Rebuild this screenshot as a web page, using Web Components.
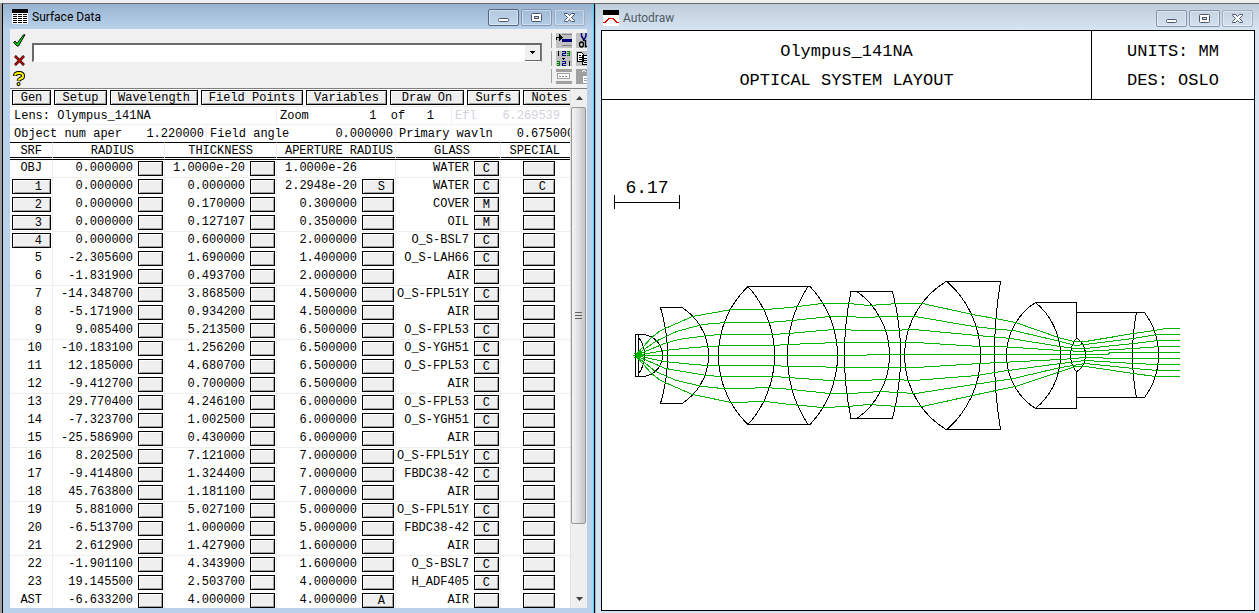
<!DOCTYPE html>
<html lang="en">
<head>
<meta charset="utf-8">
<title>Lens design workspace</title>
<style>
  html, body { height: 100%; margin: 0; }
  body { background: #a0a0a0; font-family: "Liberation Mono", monospace; font-size: 12px; color: #000; overflow: hidden; }
</style>
</head>
<body>
<mdi-desktop>
  <mdi-window heading="Surface Data" active>
    <svg slot="icon" width="16" height="16" viewBox="0 0 16 16" shape-rendering="crispEdges" aria-hidden="true">
      <path d="M0 0h16v15H0z" fill="#fff"/><path d="M0 0h16v4H0z"/>
      <path d="M1 5.500h4M6 5.500h4M11 5.500h4M1 7.500h4M6 7.500h4M11 7.500h4M1 9.500h4M6 9.500h4M11 9.500h4M1 11.500h4M6 11.500h4M11 11.500h4M1 13.500h4M6 13.500h4M11 13.500h4" stroke="#000"/>
    </svg>
    <surface-toolbar></surface-toolbar>
    <surface-sheet></surface-sheet>
  </mdi-window>
  <mdi-window heading="Autodraw">
    <svg slot="icon" width="16" height="16" viewBox="0 0 16 16" shape-rendering="crispEdges" aria-hidden="true">
      <path d="M0 0h16v16H0z" fill="#fff"/><path d="M0 0h16v5H0z"/>
      <path d="M0 12.500h2l4-4h4l4 4h2" fill="none" stroke="#e00000"/>
    </svg>
    <lens-layout></lens-layout>
  </mdi-window>
</mdi-desktop>

<script>
const define = (name, html, setup) => customElements.define(name, class extends HTMLElement {
  constructor() {
    super();
    const template = document.createElement('template');
    template.innerHTML = html;
    this.attachShadow({ mode: 'open' }).append(template.content.cloneNode(true));
  }
  connectedCallback() { if (setup) setup(this, this.shadowRoot); }
});

define('mdi-desktop', `
<style>
  :host { display: grid; grid-template-columns: 593fr 664fr; box-sizing: border-box; height: 100vh; padding: 0 0 0 2px;
    background: #a0a0a0; border-top: 3px solid #f0f0f0; }
</style><slot></slot>`);

define('mdi-window', `
<style>
  :host { display: flex; flex-direction: column; box-sizing: border-box; min-width: 0; min-height: 0; padding: 0 4px 2px 5px;
    background: #d7e4f2; border-top: 1px solid #696969; border-left: 1px solid #9fb6cf; }
  :host([active]) { background: #b9d1ea; border-left: 1px solid #000; border-right: 1px solid #000; padding: 0 7px 5px 7px; box-shadow: inset -1px 0 #4cd0f0; }
  header { display: flex; align-items: center; gap: 4px; height: 26px; margin: 0 -4px 0 -5px; padding: 2px 6px 0 7px; box-sizing: border-box;
    background: linear-gradient(#bfcddb, #d7e4f2); }
  :host([active]) header { height: 25px; margin: 0 -6px 0 -7px; padding: 1px 8px 0 9px; background: linear-gradient(#98b4d2, #b9d1ea); }
  h2 { flex: 1; margin: 0; font: 12px/18px Roboto, sans-serif; color: #505a64; }
  :host([active]) h2 { color: #000; }
  nav { display: flex; gap: 2px; }
  nav button { width: 31px; height: 17px; padding: 0; border: 1px solid #8593b0; border-radius: 2px; background: transparent;
    box-shadow: inset 0 0 0 1px #ffffff66; display: grid; place-items: center; }
  nav button:last-child { border-color: #a2aebf; }
  :host([active]) nav button:first-child { border-color: #53657f; background: #ffffff33; }
  main { flex: 1; display: flex; flex-direction: column; min-height: 0; overflow: hidden; }
</style>
<header><slot name="icon"></slot><h2></h2>
  <nav>
    <button aria-label="Minimize"><svg width="13" height="11" viewBox="0 0 13 11"><rect x="1.5" y="6.5" width="10" height="3" rx="1" fill="#fff" stroke="#4e5668"/></svg></button>
    <button aria-label="Maximize"><svg width="13" height="11" viewBox="0 0 13 11"><rect x="1.5" y="1.5" width="10" height="8" rx="1" fill="#fff" stroke="#4e5668"/><rect x="4.5" y="4.5" width="4" height="2" fill="#cbd9ea" stroke="#4e5668"/></svg></button>
    <button aria-label="Close"><svg width="13" height="11" viewBox="0 0 13 11"><path d="M1.5 1.5h3l2 2 2-2h3v1L8.500 5.500l3 3v1h-3l-2-2-2 2h-3v-1l3-3-3-3z" fill="#fff" stroke="#4e5668"/></svg></button>
  </nav>
</header>
<main><slot></slot></main>`, (host, root) => {
  root.querySelector('h2').textContent = host.getAttribute('heading');
});

define('surface-toolbar', `
<style>
  :host { display: flex; height: 60px; flex: none; background: #f0f0f0; border-bottom: 1px solid #808080; box-sizing: border-box; overflow: hidden; }
  button { padding: 0; border: 0; background: none; display: grid; place-items: center; }
  .verbs { display: grid; grid-template-rows: 20px 18px 18px; width: 22px; padding: 2px 2px 0 3px; box-sizing: border-box; }
  .verbs button { width: 13px; }
  .combo { flex: 1; display: flex; height: 19px; margin: 14px 9px 0 0; box-sizing: border-box; background: #fff;
    border: 1px solid #fff; border-top: 2px solid #696969; border-left: 2px solid #696969; border-right-color: #808080; }
  input { flex: 1; min-width: 0; border: 0; outline: 0; padding: 0 2px; font: inherit; }
  .combo button { width: 16px; background: #f0f0f0; border-right: 1px solid #696969; border-bottom: 1px solid #696969; }
  .tools { display: grid; grid-template-columns: 16px 11px; grid-auto-rows: 15px; gap: 3px 4px; padding: 4px 0 0 4px; }
  .tools button { overflow: hidden; background: #c0c0c0; place-items: start; }
  .rule { width: 1px; margin: 4px 0 5px; background: repeating-linear-gradient(#a0a0a0 0 15px, #f0f0f0 15px 18px); }
</style>
<div class="verbs">
  <button aria-label="Accept"><svg width="13" height="14" viewBox="0 0 13 14"><path d="M.7 8.500L2 7l2 2.500L10.500.800H12L9.500 5 5.500 12H4z" fill="#0e0" stroke="#000"/></svg></button>
  <button aria-label="Cancel"><svg width="11" height="11" viewBox="0 0 11 11"><path d="M1 1l9 9M10 1l-9 9" stroke="#000" stroke-width="2.500"/><path d="M1 1l9 9M10 1l-9 9" stroke="#e00000" stroke-width="1.200"/></svg></button>
  <button aria-label="Help"><svg width="13" height="15" viewBox="0 0 13 15" fill="none"><path d="M2 5q0-3 4-3t4 3q0 2-2 2.500T5.500 10" stroke="#000" stroke-width="4"/><circle cx="5.500" cy="13" r="2" fill="#000"/><path d="M2 4.500q0-2.500 4-2.500t4 3q0 2-2 2.500T5.500 9.500" stroke="#ff0" stroke-width="2"/><circle cx="5.500" cy="13" r="1" fill="#ff0"/></svg></button>
</div>
<div class="combo"><input type="text" aria-label="Cell value"><button aria-label="Previous values"><svg width="5" height="3" shape-rendering="crispEdges"><path d="M0 0h5L2.500 3z"/></svg></button></div>
<span class="rule"></span>
<div class="tools">
  <button aria-label="Insert row"><svg width="16" height="15" viewBox="0 0 16 15" shape-rendering="crispEdges"><path d="M6 1.500h10M6 12.500h10" stroke="#808080"/><path d="M6 6h10v3H6z" fill="#000080"/><path d="M.5 7V4.500H4" fill="none" stroke="#000"/><path d="M3 1l4 3.500-4 3.500z"/></svg></button>
  <button aria-label="Cut"><svg width="11" height="15" viewBox="0 0 11 15" fill="none"><path d="M5.500 0v3l3 5M10 0v3L8 7" stroke="#000080" stroke-width="1.500"/><path d="M7.500 6v2" stroke="#000"/><ellipse cx="5.500" cy="11.500" rx="2" ry="2.500" stroke="#000" stroke-width="1.300"/><path d="M9.500 7v6.500h2" stroke="#000" stroke-width="1.300"/></svg></button>
  <button aria-label="Reverse order"><svg width="16" height="15" viewBox="0 0 16 15" shape-rendering="crispEdges" fill="none"><path d="M2.500 0v5M13.500 10v5" stroke="#000"/><path d="M6 .5h3.500v2h-3v2H10M6 10.500h3.500v2h-3v2H10" stroke="#000080"/><path d="M11 .5h2.500v4H11M11 2.500h3M1 10.500h2.500v4H1M1 12.500h3" stroke="#008000"/><path d="M5 6.500h5L7.500 9z" fill="#000"/></svg></button>
  <button aria-label="Copy"><svg width="11" height="15" viewBox="0 0 11 15" shape-rendering="crispEdges"><path d="M1.500 1.500h4l2 2v7h-6zM6.500 4.500h5v9h-5z" fill="#fff" stroke="#000"/><path d="M3 4.500h2M3 6.500h3M3 8.500h3M8 7.500h3M8 9.500h3M8 11.500h3" stroke="#000"/></svg></button>
  <button aria-label="Delete row" disabled><svg width="16" height="15" viewBox="0 0 16 15" shape-rendering="crispEdges"><path d="M0 0h16v15H0z" fill="#a0a0a0"/><path d="M0 3h16v9H0z" fill="#f0f0f0"/><path d="M1.500 4.500h12v5h-12z" fill="#fff" stroke="#a0a0a0"/><path d="M3 7.500h9" stroke="#888" stroke-dasharray="2 1"/></svg></button>
  <button aria-label="Paste" disabled><svg width="11" height="15" viewBox="0 0 11 15" shape-rendering="crispEdges"><path d="M0 0h11v15H0z" fill="#a0a0a0"/><path d="M6 3l2-2 2 2" fill="none" stroke="#fff"/><path d="M7 7h4v7H7z" fill="#fff"/><path d="M8 9.500h3M8 11.500h3" stroke="#a0a0a0"/></svg></button>
</div>`);

define('surface-sheet', `
<style>
  :host { display: flex; flex: 1; min-height: 0; background: #fff; }
  .sheet { flex: 1; min-width: 0; overflow: hidden; white-space: nowrap; }
  button { flex: none; box-sizing: border-box; height: 15px; padding: 2px 8px 0 0; border: 1px solid #000; border-radius: 0;
    background: #efefef; font: inherit; line-height: 11px; color: inherit; text-align: right;
    box-shadow: inset 1px 1px #fff, inset -1px -1px #a0a0a0; }
  nav { display: flex; gap: 3px; height: 17px; padding: 1px 0 0 2px; box-sizing: border-box; }
  nav button { padding: 2px 0 0; text-align: center; }
  .facts { display: flex; height: 18px; line-height: 18px; box-sizing: border-box; border-top: 1px solid #efefef; }
  .facts > div { display: flex; flex: none; box-sizing: border-box; justify-content: space-between; padding: 0 2px 0 3px; border-right: 1px solid #efefef; white-space: pre; }
  .facts > div:first-child { padding-left: 4px; }
  .facts > div:last-child { flex: 1; border: 0; }
  .dim { color: #d4d0dc; }
  table { table-layout: fixed; width: 100%; border-spacing: 0; }
  th, td { padding: 0; box-sizing: border-box; border-right: 1px solid #efefef; font-weight: normal; text-align: right; }
  th:last-child, td:last-child { border-right: 0; }
  th { height: 18px; padding-top: 2px; line-height: 12px; border-top: 1px solid #000; border-bottom: 3px double #000; }
  td { height: 18px; vertical-align: top; }
  td > div { display: flex; height: 17px; padding: 0 1px 0 0; box-sizing: border-box; align-items: center; justify-content: flex-end; gap: 5px; line-height: 17px; }
  tr:nth-child(3n+1) td { border-bottom: 1px solid #efefef; }
  .index button { width: 39px; }
  .index .plain { padding-right: 10px; }
  .narrow { width: 25px; }
  .wide { width: 32px; }
  .special > div { padding-right: 15px; }
</style>
<div class="sheet">
  <nav aria-label="Lens data"></nav>
  <div class="facts"><div style="width:267px"><span>Lens: Olympus_141NA</span></div><div style="width:175px;padding-right:17px"><span>Zoom</span><span>1  of   1</span></div><div class="dim"><span>Efl</span><span style="padding-right:8px">6.269539</span></div></div>
  <div class="facts"><div style="width:197px"><span>Object num aper</span><span>1.220000</span></div><div style="width:189px"><span>Field angle</span><span>0.000000</span></div><div style="justify-content:flex-start;gap:24px"><span>Primary wavln</span><span>0.675000</span></div></div>
  <table>
    <colgroup><col style="width:43px"><col style="width:112px"><col style="width:112px"><col style="width:119px"><col style="width:105px"><col></colgroup>
    <thead><tr><th style="padding-right:10px">SRF</th><th style="padding-right:30px">RADIUS</th><th style="padding-right:23px">THICKNESS</th><th style="padding-right:2px">APERTURE RADIUS</th><th style="padding-right:30px">GLASS</th><th style="padding-right:10px">SPECIAL</th></tr></thead>
    <tbody></tbody>
  </table>
</div>
<sheet-scrollbar></sheet-scrollbar>`, (host, root) => {
  const menu = [['Gen', 39], ['Setup', 53], ['Wavelength', 88], ['Field Points', 102], ['Variables', 81], ['Draw On', 74], ['Surfs', 53], ['Notes', 53]];
  root.querySelector('nav').innerHTML = menu.map(([label, width]) => `<button style="width:${width}px">${label}</button>`).join('');
  // surface, radius, thickness, aperture, glass, aperture flag, glass flag, special flag
  const rows = `OBJ,0.000000,1.0000e-20,1.0000e-26,WATER,-,C,
1,0.000000,0.000000,2.2948e-20,WATER,S,C,C
2,0.000000,0.170000,0.300000,COVER,,M,
3,0.000000,0.127107,0.350000,OIL,,M,
4,0.000000,0.600000,2.000000,O_S-BSL7,,C,
5,-2.305600,1.690000,1.400000,O_S-LAH66,,C,
6,-1.831900,0.493700,2.000000,AIR,,,
7,-14.348700,3.868500,4.500000,O_S-FPL51Y,,C,
8,-5.171900,0.934200,4.500000,AIR,,,
9,9.085400,5.213500,6.500000,O_S-FPL53,,C,
10,-10.183100,1.256200,6.500000,O_S-YGH51,,C,
11,12.185000,4.680700,6.500000,O_S-FPL53,,C,
12,-9.412700,0.700000,6.500000,AIR,,,
13,29.770400,4.246100,6.000000,O_S-FPL53,,C,
14,-7.323700,1.002500,6.000000,O_S-YGH51,,C,
15,-25.586900,0.430000,6.000000,AIR,,,
16,8.202500,7.121000,7.000000,O_S-FPL51Y,,C,
17,-9.414800,1.324400,7.000000,FBDC38-42,,C,
18,45.763800,1.181100,7.000000,AIR,,,
19,5.881000,5.027100,5.000000,O_S-FPL51Y,,C,
20,-6.513700,1.000000,5.000000,FBDC38-42,,C,
21,2.612900,1.427900,1.600000,AIR,,,
22,-1.901100,4.343900,1.600000,O_S-BSL7,,C,
23,19.145500,2.503700,4.000000,H_ADF405,,C,
AST,-6.633200,4.000000,4.000000,AIR,A,,`.split('\n').map(line => line.split(','));
  const key = (cls, text, label) => `<button class="${cls}" aria-label="${label}">${text}</button>`;
  root.querySelector('tbody').innerHTML = rows.map(([srf, radius, thick, aper, glass, aFlag, gFlag, sFlag]) => {
    const index = +srf >= 1 && +srf <= 4 ? `<div><button>${srf}</button></div>` : `<div class="plain">${srf}</div>`;
    const aperKey = aFlag === '-' ? '<span class="wide"></span>' : key('wide', aFlag, `Aperture type ${srf}`);
    return `<tr><td class="index">${index}</td><td><div>${radius}${key('narrow', '', `Radius type ${srf}`)}</div></td>` +
      `<td><div>${thick}${key('narrow', '', `Thickness type ${srf}`)}</div></td><td><div>${aper}${aperKey}</div></td>` +
      `<td><div>${glass}${key('narrow', gFlag, `Glass type ${srf}`)}</div></td><td class="special"><div>${key('wide', sFlag, `Special data ${srf}`)}</div></td></tr>`;
  }).join('');
});

define('sheet-scrollbar', `
<style>
  :host { display: flex; flex-direction: column; width: 17px; background: #efefef; border-left: 1px solid #e3e3e3; box-sizing: border-box; }
  button { height: 18px; flex: none; padding: 0; border: 0; background: none; display: grid; place-items: center; }
  .thumb { height: 82%; max-height: calc(100% - 102px); flex: none; width: 15px; box-sizing: border-box; display: grid; place-items: center; border: 1px solid #979797; border-radius: 2px;
    background: linear-gradient(90deg, #f5f5f5, #e0e0e2 50%, #c4c4c8); }
  .track { flex: 1; }
</style>
<button aria-label="Scroll up"><svg width="7" height="4"><path d="M0 4L3.500 0 7 4z" fill="#404040"/></svg></button>
<div class="thumb"><svg width="7" height="8" shape-rendering="crispEdges"><path d="M0 .5h7M0 3.500h7M0 6.500h7" stroke="#606060"/></svg></div>
<div class="track"></div>
<button aria-label="Scroll down"><svg width="7" height="4"><path d="M0 0h7L3.500 4z" fill="#404040"/></svg></button>`);

define('lens-layout', `
<style>
  :host { display: flex; flex-direction: column; flex: 1; min-height: 0; box-sizing: border-box; border: 1px solid #000; background: #fff; }
  .plate { display: grid; grid-template-columns: 3fr 1fr; flex: none; height: 69px; box-sizing: border-box; border-bottom: 1px solid #000; font-size: 17px; line-height: 29px; }
  .plate div { padding-top: 6px; text-align: center; white-space: pre; }
  .plate div + div { border-left: 1px solid #000; }
  p { margin: 0; }
  svg { display: block; width: 100%; flex: 1; min-height: 0; }
  text { font: 18px "Liberation Mono", monospace; }
</style>
<div class="plate"><div><p>Olympus_141NA</p><p>OPTICAL SYSTEM LAYOUT</p></div><div><p>UNITS: MM</p><p>DES: OSLO</p></div></div>
<svg viewBox="602 100 652 510" preserveAspectRatio="xMinYMin meet" fill="none" stroke="#000" shape-rendering="crispEdges" role="img" aria-label="Lens elements with traced rays">
  <path d="M614.500 195v14M679.500 195v14M614 202.500h66"/>
  <text x="647" y="193" text-anchor="middle" fill="#000" stroke="none">6.17</text>
  <path class="glass"/>
  <g class="rays" stroke="#00b400"></g>
</svg>`, (host, root) => {
  // an arc of a circle through (x, top), (apex, middle) and (x, bottom)
  const arc = (x, apex, top, bottom) => {
    const h = (bottom - top) / 2, s = Math.abs(apex - x), r = (h * h + s * s) / (2 * s);
    return `M${x} ${top}A${r} ${r} 0 0 ${apex > x ? 1 : 0} ${x} ${bottom}`;
  };
  const edges = (x1, x2, top, bottom) => `M${x1} ${top}H${x2}M${x1} ${bottom}H${x2}`;
  root.querySelector('.glass').setAttribute('d', [
    'M635.500 334V377M638.500 334V377', edges(635, 643, 334.5, 376.5), arc(643, 662.5, 334.5, 376.5), arc(638.5, 644.5, 337, 374),
    edges(660, 682, 307.5, 403.5), arc(660.5, 667.5, 307.5, 403.5), arc(682, 708.5, 307.5, 403.5),
    edges(748, 811, 286.5, 424.5), arc(748, 718.5, 286.5, 424.5), arc(748, 774.5, 286.5, 424.5), arc(808, 787.5, 286.5, 424.5), arc(810, 837.5, 286.5, 424.5),
    edges(851, 893, 291.5, 418.5), arc(851, 844.5, 291.5, 418.5), arc(857, 889.5, 291.5, 418.5), arc(892.5, 900.5, 291.5, 418.5),
    edges(946, 1001, 281.5, 429.5), arc(946, 904.5, 281.5, 429.5), arc(947, 980.5, 281.5, 429.5), arc(1000.5, 994.5, 281.5, 429.5),
    edges(1035, 1077, 302.5, 408.5), arc(1035.5, 1006.5, 302.5, 408.5), arc(1035.5, 1060.5, 302.5, 408.5),
    'M1076.500 302V338M1076.500 372V409', arc(1076.5, 1070.5, 338, 372), arc(1076.5, 1085.5, 338, 372),
    edges(1077, 1145, 312.5, 397.5), arc(1136.5, 1132.5, 312.5, 397.5), arc(1144.5, 1158.5, 312.5, 397.5)
  ].join(''));
  const rays = [
    '650,338 660,330 692,316 731,309 765,309 790,307 822,303 848,303 868,305 898,303 922,303 972,314 1000,319 1015,322 1058,337 1073,341 1085,341 1133,333 1154,330 1165,328 1179,328',
    '655,341 676,331 702,324 725,322 768,322 792,320 829,316 848,316 863,317 887,316 915,316 973,326 1000,329 1013,330 1060,341 1075,345 1085,344 1133,338 1157,334 1179,334',
    '664,343 678,339 707,335 720,334 772,334 788,333 833,329 867,330 890,330 913,329 977,335 1000,337 1010,338 1060,346 1075,348 1085,348 1133,343 1158,340 1179,340',
    '664,350 693,347 708,346 727,345 773,345 787,344 837,342 900,342 915,342 980,346 1000,346 1060,350 1085,351 1133,348 1160,346 1179,346',
    '866,355 867,354 1108,354 1109,352 1179,352',
    '664,361 693,364 708,365 773,365 787,366 813,366 837,367 915,367 980,363 1000,362 1060,359 1085,357 1120,358 1179,358',
    '665,368 706,375 720,376 772,376 788,377 829,380 850,380 893,379 913,380 977,375 1000,371 1060,363 1085,360 1133,363 1158,364 1179,364',
    '655,371 676,380 702,386 722,388 745,388 765,387 792,389 829,393 850,393 880,391 915,393 973,384 1000,380 1013,378 1060,367 1085,363 1133,368 1157,370 1179,370',
    '650,372 660,380 692,394 731,402 765,401 790,404 822,407 848,406 868,404 898,406 922,406 972,395 1000,389 1015,386 1060,371 1075,366 1085,366 1133,373 1155,376 1179,376'
  ];
  root.querySelector('.rays').innerHTML = rays.map(points => `<polyline transform="translate(.5 .5)" points="635,355 ${points}"/>`).join('') +
    '<path d="M633 355.500h9M634 353.500h6M634 357.500h6"/>';
});
</script>
</body>
</html>
